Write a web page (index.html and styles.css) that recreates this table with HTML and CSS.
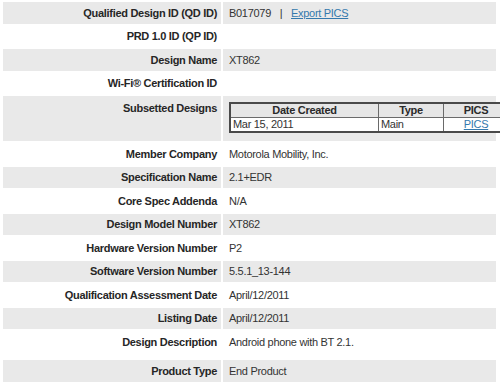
FILE: index.html
```html
<!DOCTYPE html>
<html>
<head>
<meta charset="utf-8">
<link rel="stylesheet" href="styles.css">
</head>
<body>
<table class="details">
  <tr class="shade">
    <th class="label">Qualified Design ID (QD ID)</th>
    <td class="value">B017079 <span class="sep">|</span> <a href="#" class="link">Export PICS</a></td>
  </tr>
  <tr>
    <th class="label">PRD 1.0 ID (QP ID)</th>
    <td class="value"></td>
  </tr>
  <tr class="shade">
    <th class="label">Design Name</th>
    <td class="value">XT862</td>
  </tr>
  <tr>
    <th class="label">Wi-Fi® Certification ID</th>
    <td class="value"></td>
  </tr>
  <tr class="shade subset-row">
    <th class="label top">Subsetted Designs</th>
    <td class="value top">
      <table class="subset">
        <tr class="subset-head">
          <th class="c-date">Date Created</th>
          <th class="c-type">Type</th>
          <th class="c-pics">PICS</th>
        </tr>
        <tr>
          <td>Mar 15, 2011</td>
          <td>Main</td>
          <td class="center"><a href="#" class="link">PICS</a></td>
        </tr>
      </table>
    </td>
  </tr>
  <tr>
    <th class="label">Member Company</th>
    <td class="value">Motorola Mobility, Inc.</td>
  </tr>
  <tr class="shade">
    <th class="label">Specification Name</th>
    <td class="value">2.1+EDR</td>
  </tr>
  <tr>
    <th class="label">Core Spec Addenda</th>
    <td class="value">N/A</td>
  </tr>
  <tr class="shade">
    <th class="label">Design Model Number</th>
    <td class="value">XT862</td>
  </tr>
  <tr>
    <th class="label">Hardware Version Number</th>
    <td class="value">P2</td>
  </tr>
  <tr class="shade">
    <th class="label">Software Version Number</th>
    <td class="value">5.5.1_13-144</td>
  </tr>
  <tr>
    <th class="label">Qualification Assessment Date</th>
    <td class="value">April/12/2011</td>
  </tr>
  <tr class="shade">
    <th class="label">Listing Date</th>
    <td class="value">April/12/2011</td>
  </tr>
  <tr class="desc-row">
    <th class="label">Design Description</th>
    <td class="value">Android phone with BT 2.1.</td>
  </tr>
  <tr class="shade">
    <th class="label">Product Type</th>
    <td class="value">End Product</td>
  </tr>
</table>
</body>
</html>
```

FILE: styles.css
```css
html, body {
  margin: 0;
  padding: 0;
  background: #ffffff;
}

body {
  font-family: "Liberation Sans", Arial, sans-serif;
  font-size: 11px;
  letter-spacing: -0.3px;
  color: #2b2b2b;
}

.details {
  margin-left: 1px;
  width: 497px;
  border-collapse: separate;
  border-spacing: 2px;
  table-layout: fixed;
}

.details > tbody > tr > .label,
.details > tbody > tr > .value {
  height: 21.5px;
  padding: 0;
  vertical-align: middle;
  line-height: 14px;
}

.label {
  width: 218px;
  text-align: right;
  font-weight: bold;
  padding-right: 4px !important;
  color: #262626;
  box-sizing: border-box;
}

.value {
  text-align: left;
  padding-left: 6px !important;
  color: #333333;
}

.shade > .label,
.shade > .value {
  background: #e9e9e9;
}

.sep {
  margin: 0 6px;
}

.link {
  color: #3479ad;
  text-decoration: underline;
}

.details > tbody > .subset-row > .label {
  height: 40px;
  padding-top: 5px;
  vertical-align: top;
}

.details > tbody > .subset-row > .value {
  height: 39px;
  padding-top: 6px;
  vertical-align: top;
}

.details > tbody > .desc-row > .label,
.details > tbody > .desc-row > .value {
  height: 23px;
  padding-top: 4px;
  vertical-align: top;
}

.subset {
  width: 263px;
  border-collapse: collapse;
  border: 2px solid #4a4a4a;
  background: #ffffff;
  table-layout: fixed;
}

.subset th,
.subset td {
  border: 1px solid #6a6a6a;
  height: 13px;
  padding: 0 2px;
  line-height: 13px;
  text-align: left;
  font-weight: normal;
}

.subset .subset-head th {
  background: #e6e6e6;
  font-weight: bold;
  text-align: center;
  color: #2a2a2a;
}

.c-date { width: 143px; }
.c-type { width: 60px; }
.c-pics { width: 60px; }

.subset td.center {
  text-align: center;
}
```
